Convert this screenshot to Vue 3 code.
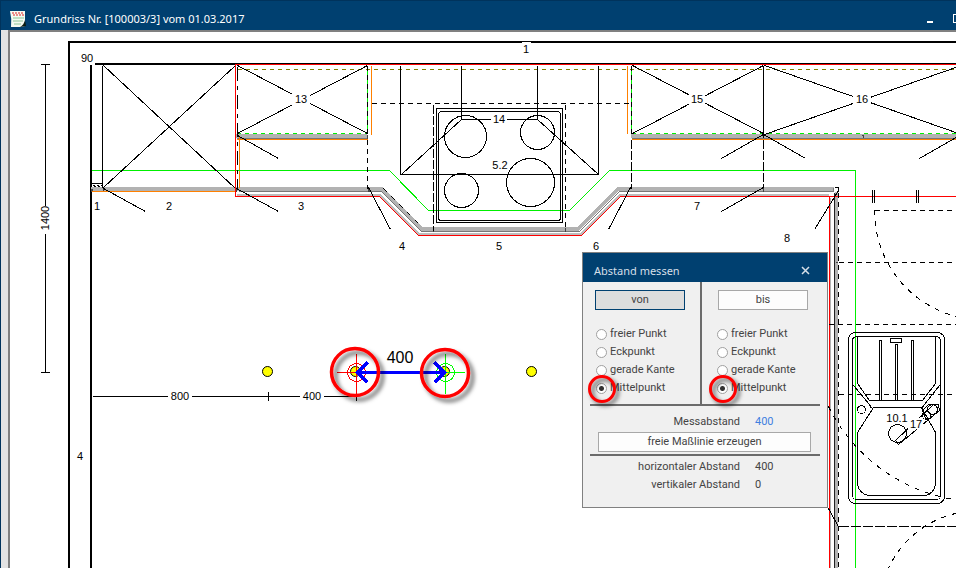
<script setup>
import { ref } from 'vue'

const modes = ['freier Punkt', 'Eckpunkt', 'gerade Kante', 'Mittelpunkt']
const sides = [
  { id: 'from', button: 'von' },
  { id: 'to', button: 'bis' },
]
const chosen = ref({ from: 'Mittelpunkt', to: 'Mittelpunkt' })
const active = ref('from')

const labels = [
  { t: '90', x: 87, y: 62 },
  { t: '1', x: 526, y: 53 },
  { t: '1', x: 97, y: 210 },
  { t: '2', x: 169, y: 210 },
  { t: '3', x: 301, y: 210 },
  { t: '4', x: 402, y: 250 },
  { t: '5', x: 499, y: 250 },
  { t: '6', x: 596, y: 250 },
  { t: '7', x: 697, y: 210 },
  { t: '8', x: 787, y: 242 },
  { t: '13', x: 301, y: 103 },
  { t: '14', x: 499, y: 123 },
  { t: '15', x: 697, y: 103 },
  { t: '16', x: 862, y: 103 },
  { t: '5.2', x: 500, y: 169 },
  { t: '10.1', x: 897, y: 422 },
  { t: '17', x: 916, y: 428 },
  { t: '4', x: 80, y: 460 },
  { t: '800', x: 180, y: 400 },
  { t: '400', x: 312, y: 400 },
]
</script>

<template>
  <div class="window">
    <header class="titlebar">
      <svg class="doc" viewBox="0 0 18 18" width="18" height="18" aria-hidden="true">
        <path d="M1 1H16V11Q15 13 16 16L12 17H2Q3 9 1 1Z" fill="#f4fbf2" />
        <path d="M16 10L17 16L11 17Q15 15 16 10Z" fill="#0b1c10" />
        <path d="M3 3H15M4 5H15" stroke="#e86a6a" stroke-width="1.500" stroke-dasharray="2 1" />
        <path d="M4 8H15M4 11H14M5 14H12" stroke="#8cc79a" />
      </svg>
      <h1>Grundriss Nr. [100003/3] vom 01.03.2017</h1>
      <div class="controls">
        <button type="button" aria-label="Minimieren"><span class="min"></span></button>
        <button type="button" aria-label="Maximieren"><span class="max"></span></button>
      </div>
    </header>

    <main class="canvas">
      <svg class="plan" viewBox="10 32 946 536" role="img" aria-label="Grundriss">
        <defs>
          <filter id="shade" x="-30%" y="-30%" width="170%" height="170%">
            <feDropShadow dx="4" dy="4" stdDeviation="2" flood-color="#000" flood-opacity="0.6" />
          </filter>
        </defs>

        <g shape-rendering="crispEdges" fill="none">
          <!-- walls -->
          <path d="M960 42H69V570M95 64H960M91 65V570" stroke="#000" stroke-width="2" />
          <!-- worktop fronts -->
          <path d="M91 189H382L422 229H578L618 189H834" stroke="#b2b2b2" stroke-width="4" />
          <path d="M236 136H367M631 136H960" stroke="#b2b2b2" stroke-width="4" />
          <path d="M237 195H380L419 234H581L620 195H829" stroke="#bdbdbd" stroke-width="2" />
          <path d="M836.5 192V570" stroke="#b2b2b2" stroke-width="3" />
          <rect x="834" y="187" width="5" height="5" fill="#fff" />
        </g>

        <g transform="translate(.5 .5)" shape-rendering="crispEdges" fill="none" stroke-width="1">
          <path d="M238 191H381L421 231H579L619 191H833M236 138H367M631 138H960M833 187V191" stroke="#777" />
          <path d="M830 197V570" stroke="#b2b2b2" />
          <path d="M834 192V570" stroke="#222" />
          <path d="M236 187V191M103 187V191M91 188V191M92 188V191M367 134V138M368 187V191M369 187V191M433 227V231M565 227V231M763 187V191M863 134V137M862 134V135M835 262H837" stroke="#444" />

          <g stroke="#ff8000">
            <path d="M91 191H235M236 139H367M631 139H960M371 65V134M627 65V133M239 136V187" />
          </g>
          <path d="M237 69H960" stroke="#808000" stroke-dasharray="4 4" />

          <g stroke="#00f000">
            <path d="M91 170H389L428 210H569L609 170H855V570" />
            <path d="M236 133H367M631 133H960" stroke-dasharray="4 4" />
            <path d="M367 65V133M631 65V133" />
          </g>

          <g stroke="#f00">
            <path d="M960 64H235V196H379L418 235H581L620 196H960M829 196V570" />
          </g>

          <g stroke="#000">
            <path d="M102 65V187M103 65L235 188M103 187L235 65M91 183H102" />
            <path d="M92 185H102M93 186H102" stroke-dasharray="2 2" />
            <path d="M103 188L145 211M236 188L278 211M237 135L278 158M368 187L390 229M630 187L608 229M763 187L721 211M763 134L721 158M763 134L805 158M961 134L919 158M838 190L814 229" />
            <path d="M237 65L367 133M237 133L367 65M632 65L763 133M632 133L763 65M764 65L961 134M764 134L961 65" />
            <path d="M763 65V137" />
            <path d="M400 65V174H598V65M461 65V119H537V65M461 119L401 174M537 119L598 174" />
            <path d="M237 66V188" stroke-dasharray="14 5 4 5" />
            <path d="M367 65V133M631 65V133M371 103H630" stroke-dasharray="5 4" />
            <path d="M367 139V188M565 104V230M838 192V570" stroke-dasharray="5 4" />
            <path d="M433 104V230M631 139V188M763 139V187" stroke-dasharray="9 2" />
            <path d="M383 188L419 224" stroke-dasharray="5 6" />
            <path d="M834 187H838V191" />
            <rect x="436" y="108" width="126" height="114" />
            <rect x="438" y="111" width="122" height="109" rx="3" />
            <circle cx="465" cy="136" r="21" />
            <circle cx="537" cy="132" r="17" />
            <circle cx="461" cy="190" r="17" />
            <circle cx="530" cy="182" r="24" />

            <!-- pipes and door swings -->
            <path d="M872 189V202M874 189V202M916 189V202M918 189V202" />
            <path d="M874 210H960M838 262H960M828 324H960M838 394H960" stroke-dasharray="5 4" />
            <path d="M838 526H960" stroke-dasharray="10 2" />
            <path d="M874 210A109 109 0 0 0 960 317M828 406A172 172 0 0 0 960 500M887 570A98 98 0 0 1 960 512" stroke-dasharray="5 6" />
            <path d="M828 508L838 526" />

            <!-- sink -->
            <rect x="848" y="332" width="96" height="171" rx="7" />
            <rect x="852" y="336" width="88" height="163" rx="4" />
            <path d="M857 336V383L869 400H922L935 383V336" />
            <path d="M853 385L869 404L871 408M939 385L924 404L921 408" />
            <path d="M873 407H921L935 432V483Q934 493 925 495H868Q858 493 857 483V432Z" />
            <path d="M879 400V340H881V400M895 400V344H897V400M911 400V340H913V400" />
            <rect x="890" y="338" width="11" height="4" />
            <circle cx="861" cy="409" r="4" />
            <circle cx="932" cy="409" r="5" />
            <circle cx="926" cy="415" r="4" />
            <circle cx="897" cy="433" r="9" />
            <path d="M895 440L933 404L938 404L939 410L898 444L895 440M922 410L928 404H934M922 410L925 418L930 418" />

            <!-- dimension lines -->
            <path d="M40 64H49M45 64V205M45 233V372M40 372H49" />
            <path d="M92 396H356M268 391V400M356 391V400" />
          </g>
        </g>

        <g fill="#fff">
          <rect x="522" y="42" width="9" height="13" />
          <rect x="82" y="54" width="13" height="10" />
          <rect x="292" y="93" width="18" height="13" />
          <rect x="491" y="113" width="16" height="12" />
          <rect x="689" y="93" width="16" height="13" />
          <rect x="853" y="93" width="18" height="13" />
          <rect x="168" y="391" width="24" height="12" />
          <rect x="300" y="391" width="24" height="12" />
          <rect x="908" y="418" width="15" height="11" />
        </g>

        <g class="label">
          <text v-for="(l, i) in labels" :key="i" :x="l.x" :y="l.y">{{ l.t }}</text>
          <text transform="translate(49 218) rotate(-90)">1400</text>
          <text class="big" x="400" y="363">400</text>
        </g>

        <!-- measuring points -->
        <g fill="#ff0" stroke="#000">
          <circle cx="267.500" cy="371.500" r="5" />
          <circle cx="355.500" cy="371.500" r="5" />
          <circle cx="444.500" cy="371.500" r="5" />
          <circle cx="531.500" cy="371.500" r="5" />
        </g>
        <g transform="translate(.5 .5)" fill="none" shape-rendering="crispEdges">
          <g stroke="#f00">
            <path d="M356 353V396M336 372H376" />
            <circle cx="356" cy="372" r="9" />
          </g>
          <g stroke="#0f0">
            <path d="M445 353V393M425 372H464" />
            <circle cx="445" cy="372" r="9" />
          </g>
          <path d="M357 372H444M367 362L357 372L367 382M434 362L444 372L434 382" stroke="#00f" stroke-width="3" />
        </g>
        <g fill="none" stroke="#f00" stroke-width="3.500" filter="url(#shade)">
          <circle cx="355" cy="372" r="23.500" />
          <circle cx="445" cy="373" r="23.500" />
        </g>
      </svg>

      <section class="dialog" role="dialog" aria-labelledby="dlg-title">
        <div class="dlg-head">
          <h2 id="dlg-title">Abstand messen</h2>
          <button type="button" class="close" aria-label="Schließen">
            <svg viewBox="0 0 9 9" width="9" height="9"><path d="M1 1L8 8M8 1L1 8" stroke="#d5dfe8" stroke-width="1.500" /></svg>
          </button>
        </div>
        <div class="dlg-body">
          <div class="sides">
            <fieldset v-for="s in sides" :key="s.id" class="side">
              <button type="button" class="btn" :class="{ on: active === s.id }" @click="active = s.id">{{ s.button }}</button>
              <div class="options">
                <label v-for="m in modes" :key="m" class="option" :class="{ marked: m === 'Mittelpunkt' }">
                  <input v-model="chosen[s.id]" type="radio" :name="s.id" :value="m" />
                  <span>{{ m }}</span>
                </label>
              </div>
            </fieldset>
          </div>
          <dl class="values first">
            <dt>Messabstand</dt>
            <dd class="blue">400</dd>
          </dl>
          <button type="button" class="btn wide">freie Maßlinie erzeugen</button>
          <dl class="values last">
            <dt>horizontaler Abstand</dt>
            <dd>400</dd>
            <dt>vertikaler Abstand</dt>
            <dd>0</dd>
          </dl>
        </div>
      </section>
    </main>
  </div>
</template>

<style>
body {
  margin: 0;
  background: #fff;
}
</style>

<style scoped>
.window {
  display: flex;
  flex-direction: column;
  min-height: 100vh;
  box-sizing: border-box;
  border-left: 1px solid #00335c;
  background: #e3e3e3;
  font-family: "Liberation Sans", Arial, sans-serif;
  overflow: hidden;
}
.titlebar {
  display: flex;
  align-items: center;
  height: 30px;
  box-sizing: border-box;
  padding: 6px 0 0 8px;
  border-top: 1px solid #00335c;
  background: #004070;
  color: #fff;
  overflow: hidden;
}
.doc {
  flex: none;
  margin-right: 7px;
}
h1 {
  flex: 1;
  margin: 0;
  font: 400 11px/16px "Noto Sans", sans-serif;
  white-space: nowrap;
}
.controls {
  display: flex;
  gap: 20px;
  margin-right: -7px;
}
.controls button {
  display: flex;
  align-items: flex-end;
  height: 9px;
  padding: 0;
  border: 0;
  background: none;
}
.min {
  width: 6px;
  height: 2px;
  background: #fff;
}
.max {
  width: 8px;
  height: 7px;
  border: 1px solid #fff;
}
.canvas {
  position: relative;
  flex: 1;
  margin-left: 7px;
  border-left: 2px solid #808080;
  border-top: 2px solid #808080;
  background: #fff;
}
.plan {
  display: block;
  width: 100%;
  height: auto;
}
.label {
  font-size: 11px;
  text-anchor: middle;
  fill: #000;
}
.label .big {
  font-size: 16px;
}
.dialog {
  position: absolute;
  left: 572px;
  top: 220px;
  width: 246px;
  box-sizing: border-box;
  border: 1px solid #808080;
  background: #f0f0f0;
  color: #444;
  font: 11px/18px Roboto, "Liberation Sans", Arial, sans-serif;
}
.dlg-head {
  display: flex;
  align-items: center;
  justify-content: space-between;
  height: 29px;
  box-sizing: border-box;
  padding: 6px 17px 0 11px;
  background: #004070;
}
h2 {
  margin: 0;
  color: #d5dfe8;
  font: 400 11px/16px "Noto Sans", sans-serif;
}
.close {
  display: flex;
  padding: 0;
  border: 0;
  background: none;
}
.dlg-body {
  display: flex;
  flex-direction: column;
  padding: 0 7px 12px;
}
.sides {
  display: grid;
  grid-template-columns: 110px 1fr;
  border-bottom: 2px solid #6b6b6b;
}
.side {
  min-width: 0;
  margin: 0;
  padding: 8px 0 7px 5px;
  border: 0;
}
.side + .side {
  padding-left: 15px;
  border-left: 2px solid #6b6b6b;
}
.btn {
  display: block;
  width: 90px;
  height: 20px;
  padding: 0;
  border: 1px solid #a8a8a8;
  background: #fdfdfd;
  color: #444;
  font: inherit;
}
.side + .side .btn {
  margin-left: 1px;
}
.btn.on {
  border-color: #004070;
  background: #ddd;
}
.options {
  display: grid;
  padding: 15px 0 0 1px;
}
.side + .side .options {
  padding-left: 0;
}
.option {
  position: relative;
  display: flex;
  align-items: center;
  gap: 3px;
  height: 18px;
  white-space: nowrap;
}
input {
  appearance: none;
  flex: none;
  width: 11px;
  height: 11px;
  margin: 0;
  border: 1px solid #a0a0a0;
  border-radius: 50%;
  background: #fff;
}
input:checked {
  background: radial-gradient(circle, #333 2px, #fff 3px);
}
.marked::after {
  content: "";
  position: absolute;
  left: -8px;
  top: -4px;
  width: 22px;
  height: 22px;
  border: 3px solid #f00;
  border-radius: 50%;
  filter: drop-shadow(3px 3px 2px #0009);
}
.values {
  display: grid;
  grid-template-columns: 150px 1fr;
  column-gap: 15px;
  margin: 0;
}
.first {
  padding: 7px 0 1px;
}
dt {
  text-align: right;
}
dd {
  margin: 0;
}
.blue {
  color: #3f7fe0;
}
.wide {
  align-self: stretch;
  width: auto;
  margin: 0 9px 2px 8px;
}
.last {
  padding: 2px 0 1px;
  border-top: 2px solid #6b6b6b;
}
</style>
